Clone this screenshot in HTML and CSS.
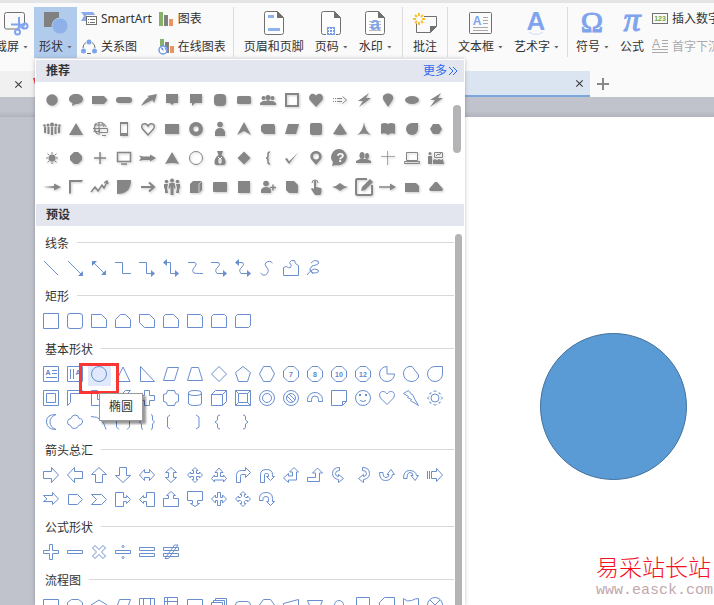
FILE: index.html
```
<!DOCTYPE html>
<html lang="zh-CN">
<head>
<meta charset="UTF-8">
<meta name="viewport" content="width=device-width, initial-scale=1.0">
<title>形状</title>
<link rel="stylesheet" href="styles.css">
</head>
<body>
<header class="ribbon">
    <button class="tool tool-cut">
        <svg class="icon" viewBox="0 0 28 28">
            <path class="line" d="M18 20H4.500a2 2 0 0 1-2-2V5.500a2 2 0 0 1 2-2h16a2 2 0 0 1 2 2V14"/>
            <path class="blue-line" d="M17 8v9l5 3M9 15.500h9l5 1M17 17l-1 4"/>
            <circle class="blue-line" cx="15.500" cy="23" r="2.500"/>
            <circle class="blue-line" cx="23" cy="17" r="2.500"/>
        </svg>
        <span class="label">截屏<i class="caret"></i></span>
    </button>
    <button class="tool active">
        <svg class="icon" viewBox="0 0 28 28">
            <path fill="#808080" d="M2 3h15v15H2z"/>
            <circle cx="18" cy="17" r="8" fill="#8eb1ea" stroke="#b1cbec"/>
        </svg>
        <span class="label">形状<i class="caret"></i></span>
    </button>
    <div class="tool-column">
        <button class="small-tool">
            <svg viewBox="0 0 16 16">
                <path fill="#8aabea" d="M0 1h12l2 3H5v6H0l3-5z"/>
                <rect class="line" x="5.500" y="5.500" width="10" height="8" fill="#fff"/>
                <path class="line" d="M7 8.500h1m1 0h5M7 11.500h1m1 0h5" stroke-width="1"/>
            </svg>
            SmartArt
        </button>
        <button class="small-tool">
            <svg viewBox="0 0 16 16">
                <path class="line" d="M5 3.500Q2 5 2 9m9-5.500q3 1.500 3 5.500M6 14.500h4"/>
                <circle cx="8" cy="3" r="2.500" fill="#7fa4ee"/>
                <circle cx="2.500" cy="12" r="2.500" fill="#7fa4ee"/>
                <circle cx="13.500" cy="12" r="2.500" fill="#7fa4ee"/>
            </svg>
            关系图
        </button>
    </div>
    <div class="tool-column">
        <button class="small-tool">
            <svg viewBox="0 0 16 16">
                <path fill="#85b168" d="M1 1h4v14H1z"/>
                <path fill="#808080" d="M6 4h4v11H6z"/>
                <path fill="#eb935f" d="M11 8h4v7h-4z"/>
            </svg>
            图表
        </button>
        <button class="small-tool">
            <svg viewBox="0 0 16 16">
                <path fill="#85b168" d="M2 0h4v7H2z"/>
                <path fill="#808080" d="M7 3h4v11H7z"/>
                <path fill="#eb935f" d="M12 7h4v7h-4z"/>
                <circle cx="5" cy="11" r="4" fill="#fff" stroke="#6f9be8" stroke-width="1.500"/>
                <path fill="#6f9be8" d="M2 8l3 1 1 3-2-1zM6 8l3 2-1 2z"/>
            </svg>
            在线图表
        </button>
    </div>
    <span class="divider"></span>
    <button class="tool">
        <svg class="icon" viewBox="0 0 28 28">
            <path class="line page" d="M6.500 2.500h11l6 6v15a2 2 0 0 1-2 2h-15a2 2 0 0 1-2-2v-19a2 2 0 0 1 2-2z"/>
            <path fill="#707070" d="M17 2l7 7h-7z"/>
            <path fill="#8fb2ee" d="M8 6h6v3H8zM8 19h12v3H8z"/>
        </svg>
        <span class="label">页眉和页脚</span>
    </button>
    <button class="tool">
        <svg class="icon" viewBox="0 0 28 28">
            <path class="line page" d="M6.500 2.500h11l6 6v15a2 2 0 0 1-2 2h-15a2 2 0 0 1-2-2v-19a2 2 0 0 1 2-2z"/>
            <path fill="#707070" d="M17 2l7 7h-7z"/>
            <path fill="#fafafa" d="M9 17h10v10H9z"/>
            <path fill="#7a9fe6" d="M10 18h8v8h-8z"/>
            <path stroke="#fff" d="M12.500 19v6m3-6v6M11 20.500h6m-6 3h6"/>
        </svg>
        <span class="label">页码<i class="caret"></i></span>
    </button>
    <button class="tool">
        <svg class="icon" viewBox="0 0 28 28">
            <path class="line page" d="M6.500 2.500h11l6 6v15a2 2 0 0 1-2 2h-15a2 2 0 0 1-2-2v-19a2 2 0 0 1 2-2z"/>
            <path fill="#707070" d="M17 2l7 7h-7z"/>
            <path stroke="#bbb" d="M8 12.500h12M8 15.500h12M8 18.500h12M8 21.500h12"/>
            <text class="glyph" x="14" y="21" font-size="18">a</text>
        </svg>
        <span class="label">水印<i class="caret"></i></span>
    </button>
    <span class="divider"></span>
    <button class="tool">
        <svg class="icon" viewBox="0 0 28 28">
            <path class="line" d="M13 7.500h12.500v10l-6 6h-14v-9"/>
            <path fill="#707070" d="M19 24v-7h7z"/>
            <path stroke="#fbc02d" stroke-width="2" d="M8 4v3m0 6v3M2 10h3m6 0h3M4 6l2 2m4 4l2 2M12 6l-2 2m-4 4l-2 2"/>
        </svg>
        <span class="label">批注</span>
    </button>
    <span class="divider"></span>
    <button class="tool">
        <svg class="icon" viewBox="0 0 28 28">
            <rect class="line" x="3.500" y="3.500" width="22" height="21" rx="1"/>
            <path stroke="#aaa" d="M17 8.500h5m-5 3h5m-5 3h5M7 18.500h15m-15 3h15"/>
            <text class="glyph" x="11" y="16" font-size="12">A</text>
        </svg>
        <span class="label">文本框<i class="caret"></i></span>
    </button>
    <button class="tool">
        <svg class="icon" viewBox="0 0 28 28">
            <text class="glyph" x="14" y="21" font-size="26">A</text>
            <path d="M7 23q7 5 14 0" stroke="#cfdff8" fill="none"/>
        </svg>
        <span class="label">艺术字<i class="caret"></i></span>
    </button>
    <span class="divider tight"></span>
    <button class="tool">
        <svg class="icon" viewBox="0 0 28 28">
            <text class="glyph serif" x="14" y="23" font-size="30">Ω</text>
        </svg>
        <span class="label">符号<i class="caret"></i></span>
    </button>
    <button class="tool">
        <svg class="icon" viewBox="0 0 28 28">
            <text class="glyph serif pi" x="14" y="22" font-size="34">π</text>
        </svg>
        <span class="label">公式</span>
    </button>
    <div class="tool-column last">
        <button class="small-tool">
            <svg viewBox="0 0 16 16">
                <rect class="line" x=".5" y="2.500" width="15" height="10"/>
                <text class="digits" x="8" y="10">123</text>
            </svg>
            插入数字
        </button>
        <button class="small-tool" disabled>
            <svg viewBox="0 0 16 16">
                <text class="drop-cap" x="4" y="9">A</text>
                <path stroke="#aaa" d="M10 1.500h6m-6 3h6m-6 3h6M0 10.500h16M0 13.500h16"/>
            </svg>
            首字下沉
        </button>
    </div>
</header>

<nav class="tabs">
    <div class="tab first"><button class="close" aria-label="关闭"></button></div>
    <div class="tab second"><svg class="doc-icon" viewBox="0 0 12 12"><path fill="#f03a3a" d="M0 0h12L9 10H3z"/></svg></div>
    <div class="tab current"><button class="close" aria-label="关闭"></button></div>
    <button class="add" aria-label="新建"></button>
</nav>

<main class="workspace">
    <div class="sheet">
        <div class="ellipse"></div>
        <div class="site">
            <div class="site-name">易采站长站</div>
            <div class="site-url">www.easck.com</div>
        </div>
    </div>
</main>

<aside class="panel">
    <div class="panel-head">
        <h2>推荐</h2>
        <a href="#more">更多<svg viewBox="0 0 10 10"><path d="M1 1l4 4-4 4M5 1l4 4-4 4"/></svg></a>
    </div>
    <div class="recommend">
        <div class="solid-grid" id="recommend"></div>
        <span class="thumb"></span>
    </div>
    <div class="panel-head">
        <h2>预设</h2>
    </div>
    <div class="presets">
        <div class="sections" id="presets"></div>
        <span class="thumb"></span>
    </div>
</aside>

<script src="shapes.js"></script>
</body>
</html>
```
FILE: styles.css
```
* {
    box-sizing: border-box;
}
body {
    margin: 0;
    height: 100vh;
    display: flex;
    flex-direction: column;
    position: relative;
    overflow: hidden;
    background-color: #fafafa;
    color: #333;
    font: 12px/20px "Noto Sans", "Noto Sans CJK SC", sans-serif;
}
button {
    border: 0;
    padding: 0;
    background: none;
    color: inherit;
    font: inherit;
    white-space: nowrap;
    flex: none;
}
svg {
    display: block;
    flex: none;
    fill: none;
}

/* ribbon */
.ribbon {
    display: flex;
    align-items: flex-start;
    flex: none;
    gap: 1px;
    height: 71px;
    padding-top: 4px;
    border-top: 3px solid #e4e4e6;
    overflow: hidden;
}
.tool {
    display: flex;
    flex-direction: column;
    align-items: center;
    height: 51px;
    padding: 2px 5px 0;
}
.tool-cut {
    width: 33px;
    align-items: flex-end;
}
.tool.active {
    background-color: #b1cbec;
}
.icon {
    width: 28px;
    height: 28px;
    margin: 0 -2px;
    overflow: visible;
}
.label {
    display: flex;
    align-items: center;
    gap: 4px;
}
.caret {
    width: 5px;
    height: 3px;
    background-color: #666;
    clip-path: polygon(0 0, 100% 0, 50% 100%);
}
.line {
    stroke: #707070;
}
.page {
    fill: #fdfdfd;
}
.blue-line {
    stroke: #7fa4ee;
    stroke-width: 2;
}
.glyph {
    fill: #7fa4ee;
    font-family: "Liberation Sans", sans-serif;
    font-weight: bold;
    text-anchor: middle;
}
.serif {
    font-family: "Liberation Serif", serif;
    font-weight: normal;
    stroke: #7fa4ee;
}
.pi {
    font-style: italic;
}
.tool-column {
    display: flex;
    flex-direction: column;
    gap: 8px;
    padding: 2px 2px 0 3px;
}
.tool-column.last {
    padding-left: 2px;
}
.small-tool {
    display: flex;
    align-items: center;
    gap: 4px;
    height: 20px;
}
.small-tool svg {
    width: 16px;
    height: 16px;
}
.small-tool:disabled {
    color: #aaa;
}
.digits {
    fill: #6aa84f;
    font: bold 7px "Liberation Sans", sans-serif;
    text-anchor: middle;
}
.drop-cap {
    fill: #aaa;
    font: 12px "Liberation Sans", sans-serif;
    text-anchor: middle;
}
.divider {
    flex: none;
    width: 1px;
    height: 50px;
    margin: 0 4px;
    background-color: #dcdcde;
}
.divider.tight {
    margin: 0 2px;
}

/* document tabs */
.tabs {
    display: flex;
    align-items: center;
    flex: none;
    height: 26px;
}
.tab {
    display: flex;
    align-items: center;
    height: 26px;
    background-color: #f0f0f0;
}
.tab.first {
    width: 33px;
    padding-left: 14px;
}
.tab.second {
    width: 200px;
}
.tab.current {
    width: 357px;
    justify-content: flex-end;
    padding-right: 6px;
    background-color: #dbe5f1;
    border-bottom: 2px solid #7aa7dc;
}
.doc-icon {
    width: 12px;
    height: 12px;
}
.close,
.add {
    position: relative;
    width: 9px;
    height: 9px;
}
.close {
    transform: rotate(45deg);
}
.add {
    width: 12px;
    height: 12px;
    margin-left: 7px;
}
.close::before,
.close::after,
.add::before,
.add::after {
    content: "";
    position: absolute;
    top: 4px;
    left: 0;
    width: 100%;
    height: 1px;
    background-color: #333;
}
.add::before,
.add::after {
    top: 5px;
    height: 2px;
    background-color: #888;
}
.close::after,
.add::after {
    transform: rotate(90deg);
}

/* canvas */
.workspace {
    flex: 1;
    padding: 20px 0 0 60px;
    background: linear-gradient(#c0c2cc, #c0c2cc 14px, #b0b2bc 20px, #c0c2cc 20px);
}
.sheet {
    position: relative;
    height: 100%;
    background-color: #fff;
}
.ellipse {
    position: absolute;
    top: 216px;
    right: 27px;
    width: 147px;
    height: 147px;
    border: 1px solid #41719c;
    border-radius: 50%;
    background-color: #5b9bd5;
}
.site {
    position: absolute;
    right: 0;
    bottom: 4px;
    width: 118px;
    white-space: nowrap;
}
.site-name {
    color: #f5101e;
    font-size: 23px;
    font-weight: 300;
    line-height: 28px;
}
.site-url {
    color: #bfa9ad;
    font: 15px/20px "Liberation Mono", monospace;
}

/* shape panel */
.panel {
    position: absolute;
    top: 59px;
    bottom: 0;
    left: 35px;
    width: 430px;
    display: flex;
    flex-direction: column;
    border: 1px solid #fff;
    border-bottom: 0;
    background-color: #fff;
    box-shadow: 0 0 4px rgba(0, 0, 0, 0.25);
}
.panel-head {
    display: flex;
    justify-content: space-between;
    align-items: center;
    flex: none;
    height: 22px;
    padding: 0 6px 0 10px;
    background-color: #e3e6ef;
}
.panel-head h2 {
    margin: 0;
    font-size: 12px;
    font-weight: bold;
}
.panel-head a {
    display: flex;
    align-items: center;
    gap: 1px;
    color: #2a6ae9;
    text-decoration: none;
}
.panel-head a svg {
    width: 10px;
    height: 10px;
    stroke: #2a6ae9;
}
.thumb {
    flex: none;
    border-radius: 4px;
    background-color: #b4b4b6;
}
.recommend {
    display: flex;
    justify-content: space-between;
    flex: none;
    padding: 8px 3px 7px 6px;
}
.recommend .thumb {
    width: 8px;
    height: 48px;
    margin-top: 15px;
}
.solid-grid {
    display: grid;
    grid-template-columns: repeat(17, 20px);
    gap: 9px 4px;
}
.solid-grid svg {
    width: 20px;
    height: 20px;
    fill: #868686;
    filter: drop-shadow(1px 1px 1px rgba(0, 0, 0, 0.2));
}
.solid-grid .open {
    fill: none;
    stroke: #868686;
}
.solid-grid .bold {
    stroke-width: 2;
}
.solid-grid .white {
    fill: #fff;
}
.solid-grid text {
    font: bold 13px "Liberation Sans", sans-serif;
    text-anchor: middle;
}
.presets {
    display: flex;
    flex: 1;
    min-height: 0;
    padding: 0 2px 0 3px;
    overflow: hidden;
}
.presets .thumb {
    width: 7px;
    margin-top: 8px;
    border-radius: 4px 4px 0 0;
}
.sections {
    flex: 1;
    padding: 6px 1px 0 0;
}
.section {
    margin-bottom: 5px;
}
.section h3 {
    display: flex;
    align-items: center;
    gap: 8px;
    height: 24px;
    margin: 0;
    padding-left: 6px;
    font-size: 12px;
    font-weight: normal;
}
.section h3::after {
    content: "";
    flex: 1;
    height: 1px;
    margin-bottom: 3px;
    background-color: #d9d9db;
}
.line-grid {
    display: grid;
    grid-template-columns: repeat(17, 24px);
}
.shape {
    position: relative;
    height: 24px;
    padding: 4px;
}
.shape svg {
    width: 16px;
    height: 16px;
    stroke: #6a8fd0;
    overflow: visible;
}
.shape .filled {
    fill: #6a8fd0;
    stroke: none;
}
.shape text {
    fill: #5f86cc;
    stroke: none;
    font: bold 7px "Liberation Sans", sans-serif;
    text-anchor: middle;
}
.shape.hovered::before {
    content: "";
    position: absolute;
    inset: 3px 0 0 1px;
    background-color: #e0e9fb;
}
.shape.hovered svg {
    position: relative;
}
.marker {
    position: absolute;
    z-index: 1;
    top: 1px;
    left: -8px;
    width: 40px;
    height: 31px;
    border: 3px solid #fb3434;
}
.tooltip {
    position: absolute;
    z-index: 2;
    top: 31px;
    left: 12px;
    padding: 3px 9px;
    border: 1px solid #999;
    background-color: #fff;
    box-shadow: 3px 3px 2px rgba(0, 0, 0, 0.4);
}
```
FILE: shapes.js
```
// filled shapes, 20 x 20 each
var recommended = [
    // row 1
    '<circle cx="10" cy="10" r="5.700"/>',
    '<path d="M10 4c4 0 7 2 7 5s-3 5-7 5l-4 2 .5-3C4 12 3 11 3 9c0-3 3-5 7-5z"/>',
    '<path d="M2 6h12l3.500 4-3.500 4H2z"/>',
    '<rect x="2" y="7" width="16" height="6" rx="3"/>',
    '<path d="M3 16q4-7 8-9l-2-1 10-2-3 9-1.500-3Q10 12 3 16z"/>',
    '<path d="M4 4h12v9h-4l-2 2-2-2H4z"/>',
    '<path d="M4 4h12v9H9l-3 3v-3H4z"/>',
    '<rect x="4" y="4" width="12" height="12" rx="4"/>',
    '<rect x="3" y="6" width="14" height="8" rx="1.500"/>',
    '<circle cx="10" cy="7.500" r="2.500"/><circle cx="5.500" cy="8" r="2"/><circle cx="14.500" cy="8" r="2"/><path d="M2 15v-2l3-2h3l2-1 2 1h3l3 2v2z"/>',
    '<path class="open bold" d="M4 4h12v12H4z"/>',
    '<path d="M10 17L4 10.500C1 6 6 1 10 5.500c4-4.500 9 .5 6 5z"/>',
    '<path class="open" d="M3 8.500h1m1 0h1m1 0h5M3 11.500h1m1 0h1m1 0h5"/><path class="open" d="M12.500 6.500l4 3.500-4 3.500"/>',
    '<path d="M15 3L4 11h5l-4 6 12-9h-5z"/>',
    '<path d="M10 17l-4-6c-3-4 0-7.500 4-7.500s7 3.500 4 7.500z"/>',
    '<ellipse cx="10" cy="10" rx="7" ry="4"/>',
    '<path d="M15 3L4 10h5l-5 7 13-9h-5z"/>',
    // row 2
    '<circle cx="10" cy="5.500" r="2"/><circle cx="6" cy="6" r="1.500"/><circle cx="14" cy="6" r="1.500"/><circle cx="2.500" cy="6.500" r="1.300"/><circle cx="17.500" cy="6.500" r="1.300"/><path class="open bold" d="M10 8v8M6.500 8v7M13.500 8v7M3 8v6M17 8v6"/>',
    '<path d="M10 4l7 12H3z"/>',
    '<path class="open" d="M16 8a6 6 0 1 0-8 7M3 9.500h12M4 6h11M3.500 12.500H9M9 3v13M6 4q-3 5 1 11M12 4l2 4"/><path class="open" fill="#fff" d="M9.500 9.500h8v4h-8zM12 16.500h4"/>',
    '<rect class="open" x="6.500" y="3.500" width="7" height="13" rx="1"/><path d="M6 3h8v2H6zM6 14h8v3H6z"/>',
    '<path class="open" stroke-width="1.500" d="M10 16L5 10.500C1 6 7 2 10 7c3-5 9-1 5 3.500z"/>',
    '<path d="M3 5h14v10H3z"/>',
    '<circle class="open" cx="10" cy="10" r="4.800" stroke-width="4.200"/>',
    '<circle cx="10" cy="5.500" r="2.800"/><path d="M5 17v-4q1-4 5-4t5 4v4z"/>',
    '<path d="M10 3l7 13-7-4-7 4z"/>',
    '<path d="M5 5h11l1 2v8H6l-3-3V7z"/>',
    '<path d="M6 5h11l-3 10H3z"/>',
    '<rect x="4" y="4" width="12" height="12" rx="2"/>',
    '<path d="M10 4l7 11q-7 2-14 0z"/>',
    '<path d="M10 3q1 9 7 13-7-3-14 0 6-4 7-13z"/>',
    '<path d="M3 5q4-2 7 0 3-2 7 0v10q-4-2-7 1-3-3-7-1z"/>',
    '<path d="M16 4v6a6 6 0 1 1-6-6z"/>',
    '<path d="M7 5h6l3 5-3 5H7l-3-5z"/>',
    // row 3
    '<circle cx="10" cy="10" r="3.500"/><path class="open" d="M10 4v2m0 8v2M4 10h2m8 0h2M5.500 5.500L7 7m6 6l1.500 1.500M5.500 14.500L7 13m6-6l1.500-1.500"/>',
    '<path d="M8 4h4l4 4v4l-4 4H8l-4-4V8z"/>',
    '<path class="open" stroke-width="1.500" d="M10 4v12M4 10h12"/>',
    '<path class="open" stroke-width="1.500" d="M3.500 4.500h13v9h-13zM7 16h6"/>',
    '<path d="M1 7.500l4 1h7V6.500l6 3.500-6 3.500V12H5l-4 1 2-3z"/>',
    '<path d="M10 4l7 12q-7-2-14 0z"/>',
    '<circle class="open" cx="10" cy="10" r="6.500"/>',
    '<path d="M7 3h6l-1.500 4q4 3 4 7 0 3-2 3h-7q-2 0-2-3 0-4 4-7z"/><path stroke="#fff" d="M8 9l2 2 2-2m-2 2v5m-2-4h4m-4 2h4"/>',
    '<path d="M10 3.500l6.500 6.500-6.500 6.500L3.500 10z"/>',
    '<path class="open" stroke-width="1.500" d="M12 4q-2 0-2 2v2q0 2-2 2 2 0 2 2v2q0 2 2 2"/>',
    '<path d="M3 11l2-1 2 3.500L16.500 4 7 16z"/>',
    '<path fill-rule="evenodd" d="M10 17l-5-6c-2-4 1-8 5-8s7 4 5 8zM10 5.500a3 3 0 1 0 0 6 3 3 0 0 0 0-6z"/>',
    '<path d="M10 1a8.500 8 0 1 1-4 16l-4 1 1-4A8.500 8 0 0 1 10 1z"/><text class="white" x="10.500" y="14">?</text>',
    '<ellipse cx="8" cy="7.500" rx="2.500" ry="3.500"/><ellipse cx="13" cy="8" rx="2" ry="3"/><path d="M2 15v-2l4-2h4l3 0 4 2v2z"/>',
    '<path class="open" opacity=".7" d="M9.500 3v14M3 8.500h14"/>',
    '<path class="open" d="M4.500 4.500h11v8h-11zM2.500 13.500h15v2h-15z"/>',
    '<circle cx="4" cy="5.500" r="1.500"/><path d="M2 8h4v8H2z"/><path class="open" d="M8.500 4.500h8v5h-8zM10 8l2-2 1 1 2-2"/><path d="M7 12l2-1 2 1 2-1 2 1 2-1 1 5H7z"/>',
    // row 4
    '<path d="M1 10l11-1V6.500l7 3.500-7 3.500V11z"/>',
    '<path d="M3 3h14l-1.500 2H5v11l-2 1z"/>',
    '<path class="open" stroke-width="1.500" d="M1 15l4-5 3 4 4-6 2 3 3-6M14 6l3-2 1 3"/>',
    '<path d="M3 3h14Q17 17 3 17z"/>',
    '<path class="open bold" d="M3 10h12M11 5.500l5 4.500-5 4.500"/>',
    '<circle cx="10" cy="3.500" r="2"/><circle cx="4.500" cy="4.500" r="1.800"/><circle cx="15.500" cy="4.500" r="1.800"/><path d="M7.500 6h5l1 5-1 1-1-3v9H8.500V9l-1 3-1-1zM2 7h4l-1 4 1 5H3v-5l-1 1zM14 7h4v5l-1-1v5h-3l1-5z"/>',
    '<path d="M7 4h9v9l-3 3H4V7z"/><path stroke="#ccc" d="M13 16V7l3-3"/>',
    '<rect x="3" y="5" width="14" height="10" rx="1"/>',
    '<path d="M4 4h12v12H4z"/>',
    '<circle cx="8" cy="6.500" r="2.800"/><path d="M3 16v-3q1-3 5-3t5 3v3z"/><path class="open" stroke-width="1.500" d="M12 10.500h6m-3-3v6"/>',
    '<path d="M4 4h8l4 4v8H7l-3-3z"/>',
    '<path d="M8 4q1-1 2 0v6l5 1q1 1 0 6l-1 1H9l-4-6 1-1 2 1z"/><path class="open" d="M6 6a3 3 0 1 1 6 0"/>',
    '<path d="M2 10q5-1 8-4 3 3 8 4-5 1-8 4-3-3-8-4z"/>',
    '<path class="open bold" d="M13 2H3.500Q2 2 2 3.500v13Q2 18 3.500 18h13q1.500 0 1.500-1.500V8"/><path d="M16 2l3 3-8 8-4 1 1-4z"/>',
    '<path class="open" stroke-width="1.500" d="M1 10h12"/><path d="M12 6.500l6 3.500-6 3.500z"/>',
    '<path d="M3 6h11l3 3v6H3z"/>',
    '<path d="M9 5h2l6 7-1 2H4l-1-2z"/>'
];

// outline shapes, 16 x 16 each: a path, or markup where it starts with "<"
var presets = [
    {
        title: '线条',
        shapes: [
            'M1 1l14 14',
            '<path d="M1 1l13 13"/><path class="filled" d="M16 16h-5l5-5z"/>',
            '<path d="M3 3l10 10"/><path class="filled" d="M1 1h5L1 6zM15 15h-5l5-5z"/>',
            'M0 2.500h7.500v11H16',
            '<path d="M0 2.500h7.500v11H14"/><path class="filled" d="M12 10l4 3.500-4 3.500z"/>',
            '<path d="M2 2.500h5.500v11H14"/><path class="filled" d="M4-1L0 2.500 4 6zM12 10l4 3.500-4 3.500z"/>',
            'M1 2.500h7q2.500 1 0 4-4 4-1 6.500 1 .5 9 .5',
            '<path d="M0 2.500h7q3 1 0 4.500-4 3-1 6.500h8"/><path class="filled" d="M12 10l4 3.500-4 3.500z"/>',
            '<path d="M2 2.500h5q3 1 0 4.500-4 3-1 6.500h8"/><path class="filled" d="M4-1L0 2.500 4 6zM12 10l4 3.500-4 3.500z"/>',
            'M13.500 3q-2-3-6-1-3 2 0 5 4 5-1 8-3 1-5-2',
            'M.5 15.500v-8l3-1q2 2 4 1 2-2-1-5l2-2h3l1 3 3 2v10z',
            'M4 3q3-4 7-2 2 3-2 4-5 0-6 4 0 4 6 4 4-1 2-3-4-2-6 0-3 2-5 5M3 10l3 4'
        ]
    },
    {
        title: '矩形',
        shapes: [
            'M.5.5h15v15H.5z',
            '<rect x=".5" y=".5" width="15" height="15" rx="2.500"/>',
            'M.5 1.500h10l5 5v8H.5z',
            'M.5 6.500l5-5h5l5 5v8H.5z',
            'M.5 1.500h10l5 5v8h-10l-5-5z',
            'M2.500 1.500h8l5 5v8H.5v-11z',
            'M.5 1.500h13l2 2v11H.5z',
            'M2.500 1.500h11l2 2v11H.5v-11z',
            'M2.500 1.500h13v11l-2 2H.5v-11z'
        ]
    },
    {
        title: '基本形状',
        shapes: [
            '<path d="M.5.5h15v15H.5zM9 4.500h5M9 7.500h5M3 11.500h11"/><text x="5" y="9">A</text>',
            '<path d="M.5.5h15v15H.5zM3.500 3v10M6.500 3v10"/><text x="11" y="9">A</text>',
            '<circle cx="8" cy="8" r="7.500"/>',
            'M8 1l7 14.500H1z',
            'M1.500.5v15h14z',
            'M4.500 1.500h11l-4 13H.5z',
            'M4.500 1.500h7l4 13H.5z',
            'M8 .5L15.500 8 8 15.500.5 8z',
            'M8 .5l7.500 6-3 9h-9l-3-9z',
            'M4.500.5h7l4 7.500-4 7.500h-7L.5 8z',
            '<path d="M5 .5h6L15.500 5v6L11 15.500H5L.5 11V5z"/><text x="8" y="11">7</text>',
            '<path d="M5 .5h6L15.500 5v6L11 15.500H5L.5 11V5z"/><text x="8" y="11">8</text>',
            '<path d="M5 .5h6L15.500 5v6L11 15.500H5L.5 11V5z"/><text x="8" y="11">10</text>',
            '<path d="M5 .5h6L15.500 5v6L11 15.500H5L.5 11V5z"/><text x="8" y="11">12</text>',
            'M8 .5V8h7.500A7.500 7.500 0 1 1 8 .5z',
            'M6 .5h3l6.500 8.500v2q-2 4.500-7.500 4.500-7-1-7.500-7.500Q.5 2 6 .5z',
            'M15.500.5V8A7.500 7.500 0 1 1 8 .5z',
            'M.5.5h15v15H.5zM3.500 3.500h9v9h-9z',
            'M.5.5h15l-3 3h-9v9l-3 3z',
            'M.5.500h6v9h9v6H.5z',
            'M.5 10.500l10-10h5l-15 15z',
            'M5.500.5h5v5h5v5h-5v5h-5v-5h-5v-5h5z',
            'M4.500.5h7q0 4 4 4v7q-4 0-4 4h-7q0-4-4-4v-7q4 0 4-4z',
            'M1.500 3v10q0 2.500 6.500 2.500t6.500-2.500V3Q14.500.5 8 .5T1.500 3Q1.500 5.500 8 5.500T14.500 3',
            'M.5 4.500l4-4h11v11l-4 4H.5zM.5 4.500h11v11M11.500 4.500l4-4',
            'M.5.5h15v15H.5zM3.500 3.500h9v9h-9zM.5.5l3 3m9 9l3 3M.5 15.500l3-3m9-9l3-3',
            '<circle cx="8" cy="8" r="7.500"/><circle cx="8" cy="8" r="4.500"/>',
            '<circle cx="8" cy="8" r="7.500"/><circle cx="8" cy="8" r="4.500"/><path d="M4 6l6 6M6 4l6 6"/>',
            'M.5 11.500v-2a7.500 7 0 0 1 15 0v2h-4v-2a3.500 3.500 0 0 0-7 0v2z',
            'M.5.5h15v11l-4 4H.5zM11.500 15.500v-4h4',
            '<circle cx="8" cy="8" r="7.500"/><path d="M5 10.500q3 2 6 0"/><path class="filled" d="M4 4h2v2H4zM10 4h2v2h-2z"/>',
            'M8 14.500L1.500 8C-2 2 5-1 8 4c3-5 10-2 6.500 4z',
            'M.5 3.500l5-3 3 4 1 0 2.500 5 3.500 6-8-5 1-1-4-2 1-1z',
            '<circle cx="8" cy="8" r="4"/><path d="M6.500 2L8 .5 9.500 2M6.500 14L8 15.500 9.500 14M2 6.500L.5 8 2 9.500M14 6.500L15.500 8 14 9.500M3 4.500L3 3h1.500M11.500 3H13v1.500M3 11.500V13h1.500M11.500 13H13v-1.500"/>',
            'M13 .5Q3 .5 3.500 8t9.500 7.500Q7 13 7 8t6-7.500z',
            'M3.500 11.500Q0 11 .5 7.500q.5-3 3.500-3 1-3.500 4-3.500 3.500 0 4 3.500 4 0 3.500 3.500-.5 3-4 3.500-1 3-4 3-3.500 0-4-3z',
            'M0 2.500q12 0 15 13',
            'M4 .5L1.500 3v10L4 15.500M12 .5L14.500 3v10L12 15.500',
            'M4 .5Q2.500.5 2.500 3v3L.5 8l2 2v3q0 2.500 1.500 2.500M12 .5q1.500 0 1.500 2.500v3l2 2-2 2v3q0 2.500-1.500 2.500',
            'M7 1L4.500 3v10L7 15',
            'M9 1l3 2v10l-3 2',
            'M9 1Q6.500 1 6.500 3v3L4 8l2.500 2v3q0 2 2.500 2',
            'M8 1q2.500 0 2.500 2v3L13 8l-2.500 2v3q0 2-2.500 2'
        ]
    },
    {
        title: '箭头总汇',
        shapes: [
            'M.5 4.500h8v-4L15.500 8l-7 7.500v-4h-8z',
            'M15.500 4.500h-8v-4L.5 8l7 7.500v-4h8z',
            'M4.500 15.500v-8h-4L8 .5l7.500 7h-4v8z',
            'M4.500.5v8h-4L8 15.500l7.500-7h-4v-8z',
            'M.5 8l5-5.500v3h5v-3l5 5.500-5 5.500v-3h-5v3z',
            'M8 .5l5.500 5h-3v5h3L8 15.500l-5.500-5h3v-5h-3z',
            'M8 .5l3 3H9.500v3h3V5l3 3-3 3V9.500h-3v3H11l-3 3-3-3h1.500v-3h-3V11l-3-3 3-3v1.500h3v-3H5z',
            'M8 1l4 4.500H9.500v4h3V8l3 3.500-3 3.500v-2h-9v2l-3-3.500 3-3.500v1.500h3v-4H4z',
            'M1.500 15.500v-7q0-5 5-5h4v-3l5 5-5 5v-3h-4q-1 0-1 2v6z',
            'M1.500 15.500v-8q0-5 6-5t6 5v2h2l-4 4-4-4h2v-2q0-1-2-1t-2 1v8z',
            'M11 .5l4.500 4.500h-2v8h-8v2.500l-5-4.500 5-4.500v2.500h4V5h-3z',
            'M10.500 1l5 5h-3v8.500H.5v-4h8V6h-3z',
            'M8.500.5q-7 0-7 6 0 5 6 6v3l5-4-5-4v2q-3 0-3-3 0-3 4-3z',
            'M7.500.5q7 0 7 6 0 5-6 6v3l-5-4 5-4v2q3 0 3-3 0-3-4-3z',
            'M.5 5.500q0 8 6 8 6 0 7-6h2l-3.500-5-4 5h2q0 3-3 3-3 0-3-5z',
            'M.5 11.500q0-8 6-8 6 0 7 5h2l-3.500 5-4-5h2q0-3-3-3-3 0-3 6z',
            'M.5 4v8m2-8v8M4.500 4.500h5v-3l6 6.500-6 6.500v-3h-5z',
            'M.5 4.500h9v-3l6 6.500-6 5.500v-3h-9L4 8z',
            'M1.500 3.500h9l5 5-5 5h-9z',
            'M.5 3.500h10l5 5-5 5H.5l5-5z',
            'M.5 1.500h8v5h3v-2l4 4-4 4v-2h-3v5h-8z',
            'M15.500 1.500h-8v5h-3v-2l-4 4 4 4v-2h3v5h8z',
            'M.5 15.500v-8h5v-3h-2L8 .5l4.500 4h-2v3h5v8z',
            'M.5.5v9h5v3h-2L8 15.500l4.500-3h-2v-3h5v-9z',
            'M.5 8l4-4v2.500h2v-5h3v5h2V4l4 4-4 4V9.500h-2v5h-3v-5h-2V12z',
            'M8 .5l3 3H9.500v2l1 1h2V5l3 3-3 3V9.500h-2l-1 1v2H11l-3 3-3-3h1.500v-2l-1-1h-2V11l-3-3 3-3v1.500h2l1-1v-2H5z',
            'M.5 9.500v-2q0-6 6.500-6t6.500 6v3h2l-4 4-4-4h2v-3q0-2-2.500-2t-3 2v2z'
        ]
    },
    {
        title: '公式形状',
        shapes: [
            'M6.500.5h3v6h6v3h-6v6h-3v-6h-6v-3h6z',
            'M.5 6.500h15v3H.5z',
            'M4 1.500l4 4 4-4L14.500 4l-4 4 4 4-2.500 2.500-4-4-4 4L1.500 12l4-4-4-4z',
            '<path d="M.5 6.500h15v3H.5z"/><circle cx="8" cy="2.500" r="1"/><circle cx="8" cy="13.500" r="1"/>',
            'M.5 3.500h15v3H.5zM.5 9.500h15v3H.5z',
            'M.5 3.500h15v3H.5zM.5 9.500h15v3H.5zM2 14.500L11.500 1h3.500L5.500 14.500z'
        ]
    },
    {
        title: '流程图',
        shapes: [
            'M.5 2.500h15v11H.5z',
            'M.5 13.500v-8l4-3h7l4 3v8z',
            'M8 3l8 5-8 5-8-5z',
            'M4.500 2.500h11l-4 11H.5z',
            'M.5 1.500h15v13H.5zM4.500 1.500v13M11.500 1.500v13',
            'M1.500.5h13v15h-13zM4.500.5v15M1.500 4.500h13',
            'M.5 2.500h15v11q-4-2-8 0t-7 0z',
            'M.5 5.500h11v8H.5zM2.500 5.500v-2h11v8h-2M4.500 3.500v-2h11v8h-2',
            '<rect x=".5" y="4.500" width="15" height="7" rx="3.500"/>',
            'M4.500 2.500h7l4 5.500-4 5.500h-7L.5 8z',
            'M.5 6.500l15-4v11H.5z',
            'M.5 3.500h15l-4 10h-7z',
            '<circle cx="8" cy="8" r="4.500"/>',
            'M1.500.5h13v11L8 15.500l-6.500-4z',
            'M5.500.5h10v15H.5v-10z',
            'M.5 1.500q4 4 8 2t7-2v12q-4-2-7 0t-8 0z',
            '<circle cx="8" cy="8" r="7.500"/><path d="M3 3l10 10M13 3L3 13"/>'
        ]
    }
];

var recommendGrid = document.getElementById('recommend');
recommended.forEach(function(markup) {
    recommendGrid.innerHTML += '<button><svg viewBox="0 0 20 20">' + markup + '</svg></button>';
});

var html = '';
presets.forEach(function(group) {
    html += '<section class="section"><h3>' + group.title + '</h3><div class="line-grid">';
    group.shapes.forEach(function(shape, i) {
        // the ellipse is the shape under the pointer
        var hovered = group.title === '基本形状' && i === 2;
        var markup = shape.charAt(0) === '<' ? shape : '<path d="' + shape + '"/>';
        html += '<button class="shape' + (hovered ? ' hovered' : '') + '">' +
                '<svg viewBox="0 0 16 16">' + markup + '</svg>' +
                (hovered ? '<span class="marker"></span><span class="tooltip">椭圆</span>' : '') +
                '</button>';
    });
    html += '</div></section>';
});
document.getElementById('presets').innerHTML = html;
```
